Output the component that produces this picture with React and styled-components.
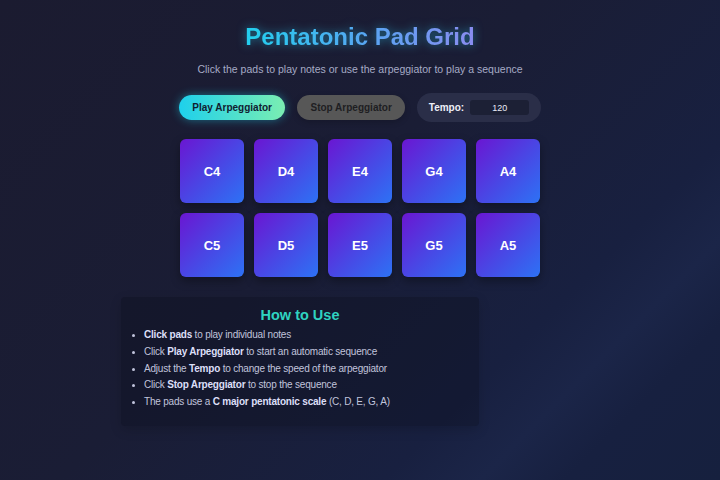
import React from "react";
import styled, { createGlobalStyle } from "styled-components";

const Global = createGlobalStyle`
  html, body { margin: 0; padding: 0; }
  body {
    width: 720px;
    height: 480px;
    overflow: hidden;
    font-family: "Liberation Sans", Arial, sans-serif;
    background: linear-gradient(135deg, #1b1b30 0%, #1a1d35 45%, #182040 72%, #1b2548 80%, #172040 87%, #16203e 100%);
    color: #e6e8f5;
  }
`;

const Page = styled.div`
  height: 480px;
  box-sizing: border-box;
  padding-top: 23px;
  display: flex;
  flex-direction: column;
  align-items: center;
`;

const Title = styled.h1`
  margin: 0;
  font-size: 24px;
  line-height: 28px;
  font-weight: 700;
  background: linear-gradient(90deg, #22cfee 0%, #5aa4f2 55%, #8a8cf0 100%);
  -webkit-background-clip: text;
  background-clip: text;
  -webkit-text-fill-color: transparent;
  filter: drop-shadow(0 0 5px rgba(40, 200, 240, 0.55));
`;

const Subtitle = styled.p`
  margin: 11px 0 0;
  font-size: 10.5px;
  line-height: 14px;
  color: #a6abc6;
`;

const Controls = styled.div`
  margin-top: 17px;
  display: flex;
  align-items: center;
  gap: 12px;
`;

const Button = styled.button`
  height: 25px;
  padding: 0 ${(p) => (p.$primary ? "13.5px" : "13px")};
  border: none;
  border-radius: 13px;
  font-family: inherit;
  font-size: 10px;
  font-weight: 700;
  cursor: pointer;
  color: ${(p) => (p.$primary ? "#102030" : "#1e1e22")};
  background: ${(p) =>
    p.$primary ? "linear-gradient(90deg, #1ed0ec, #7aeeb2)" : "#575757"};
  box-shadow: ${(p) =>
    p.$primary ? "0 0 10px rgba(34, 211, 238, 0.45)" : "0 2px 6px rgba(0,0,0,0.2)"};
`;

const TempoBox = styled.div`
  height: 29px;
  box-sizing: border-box;
  padding: 0 12px;
  display: flex;
  align-items: center;
  gap: 6px;
  border-radius: 15px;
  background: #2a2e48;
`;

const TempoLabel = styled.span`
  font-size: 10px;
  font-weight: 700;
  color: #eef0f8;
`;

const TempoInput = styled.input`
  width: 59px;
  height: 15px;
  box-sizing: border-box;
  border: none;
  border-radius: 3px;
  background: #1c2035;
  color: #e8eaf5;
  font-family: inherit;
  font-size: 9px;
  text-align: center;
  padding: 0;
  outline: none;
`;

const Grid = styled.div`
  margin-top: 17px;
  display: grid;
  grid-template-columns: repeat(5, 64px);
  grid-auto-rows: 64px;
  gap: 10px;
`;

const Pad = styled.button`
  border: none;
  border-radius: 6px;
  background: linear-gradient(135deg, #6a16d2 0%, #4a45e4 50%, #2d72f5 100%);
  color: #ffffff;
  font-family: inherit;
  font-size: 13px;
  font-weight: 700;
  box-shadow: 0 4px 10px rgba(0, 0, 0, 0.35);
  cursor: pointer;
`;

const InfoRow = styled.div`
  align-self: stretch;
  margin-top: 20px;
  padding-left: 121px;
  display: flex;
`;

const Info = styled.section`
  width: 358px;
  box-sizing: border-box;
  padding: 9px 15px 15px;
  background: rgba(12, 14, 30, 0.35);
  border-radius: 4px;
  box-shadow: 0 4px 12px rgba(0, 0, 0, 0.15);
`;

const InfoTitle = styled.h2`
  margin: 0 0 2px;
  text-align: center;
  font-size: 14.5px;
  line-height: 19px;
  font-weight: 700;
  color: #2fd3c0;
`;

const List = styled.ul`
  margin: 0;
  padding-left: 8px;
  list-style: disc;
`;

const Item = styled.li`
  font-size: 10px;
  letter-spacing: -0.2px;
  line-height: 16.75px;
  color: #c1c4dc;
  &::marker { font-size: 9px; }
  b { color: #dcdff8; font-weight: 700; }
`;

const notes = ["C4", "D4", "E4", "G4", "A4", "C5", "D5", "E5", "G5", "A5"];

export default function App() {
  return (
    <>
      <Global />
      <Page>
        <Title>Pentatonic Pad Grid</Title>
        <Subtitle>Click the pads to play notes or use the arpeggiator to play a sequence</Subtitle>
        <Controls>
          <Button $primary>Play Arpeggiator</Button>
          <Button>Stop Arpeggiator</Button>
          <TempoBox>
            <TempoLabel>Tempo:</TempoLabel>
            <TempoInput type="text" defaultValue="120" />
          </TempoBox>
        </Controls>
        <Grid>
          {notes.map((n) => (
            <Pad key={n}>{n}</Pad>
          ))}
        </Grid>
        <InfoRow>
          <Info>
            <InfoTitle>How to Use</InfoTitle>
            <List>
              <Item><b>Click pads</b> to play individual notes</Item>
              <Item>Click <b>Play Arpeggiator</b> to start an automatic sequence</Item>
              <Item>Adjust the <b>Tempo</b> to change the speed of the arpeggiator</Item>
              <Item>Click <b>Stop Arpeggiator</b> to stop the sequence</Item>
              <Item>The pads use a <b>C major pentatonic scale</b> (C, D, E, G, A)</Item>
            </List>
          </Info>
        </InfoRow>
      </Page>
    </>
  );
}
